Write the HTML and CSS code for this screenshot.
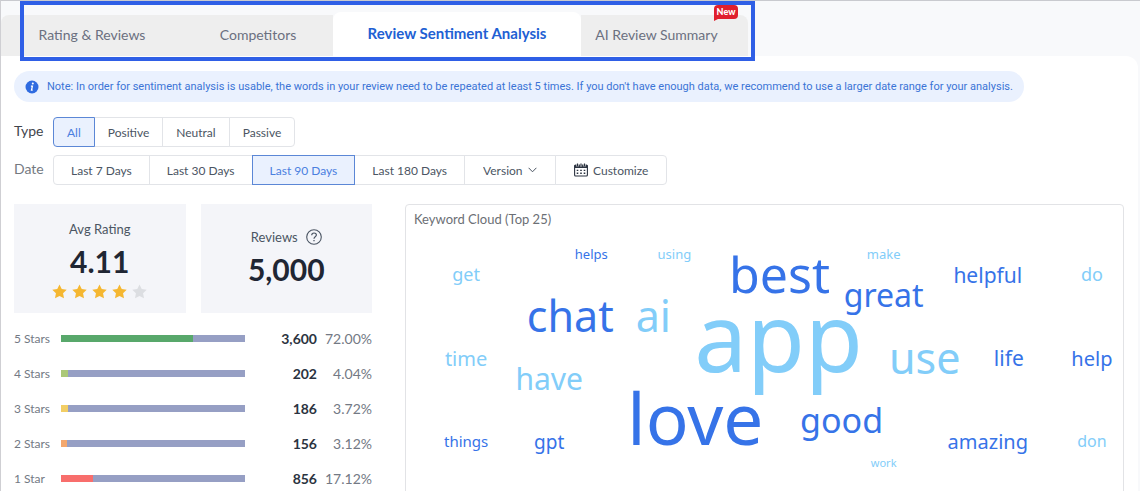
FILE: index.html
```
<!DOCTYPE html>
<html lang="en">
<head>
    <meta charset="UTF-8">
    <meta name="viewport" content="width=device-width, initial-scale=1.0">
    <title>Review Sentiment Analysis</title>
    <link rel="stylesheet" href="styles.css">
</head>
<body>
    <svg class="defs" width="0" height="0" aria-hidden="true">
        <symbol id="star" viewBox="0 0 16 16">
            <path d="M8 0.4l2.4 4.9 5.3 0.7-3.9 3.8 1 5.5L8 12.7 3.2 15.3l1-5.5L0.3 6l5.3-0.7z" fill="currentColor"/>
        </symbol>
    </svg>

    <nav class="tabs">
        <a class="tab tab-first" href="#rating">Rating &amp; Reviews</a>
        <a class="tab tab-second" href="#competitors">Competitors</a>
        <a class="tab tab-active" href="#sentiment" aria-current="page">Review Sentiment Analysis</a>
        <a class="tab tab-last" href="#summary">AI Review Summary<span class="badge">New</span></a>
        <div class="highlight"></div>
    </nav>

    <main class="panel">
        <div class="note">
            <svg width="14" height="14" viewBox="0 0 14 14" aria-hidden="true">
                <circle cx="7" cy="7" r="6.5" fill="#2f6be0"/>
                <circle cx="7.8" cy="3.6" r="1" fill="#fff"/>
                <path d="M5.9 6.1h1.5l-0.9 4.1h1.2" fill="none" stroke="#fff" stroke-width="1.3"/>
            </svg>
            <p>Note: In order for sentiment analysis is usable, the words in your review need to be repeated at least 5 times. If you don't have enough data, we recommend to use a larger date range for your analysis.</p>
        </div>

        <div class="filter">
            <span class="filter-label filter-label-dark" id="type-label">Type</span>
            <div class="group group-type" role="group" aria-labelledby="type-label">
                <button type="button" class="active">All</button>
                <button type="button">Positive</button>
                <button type="button">Neutral</button>
                <button type="button">Passive</button>
            </div>
        </div>

        <div class="filter">
            <span class="filter-label" id="date-label">Date</span>
            <div class="group group-date" role="group" aria-labelledby="date-label">
                <button type="button">Last 7 Days</button>
                <button type="button">Last 30 Days</button>
                <button type="button" class="active">Last 90 Days</button>
                <button type="button">Last 180 Days</button>
                <div class="version">
                    <select aria-label="Version">
                        <option>Version</option>
                    </select>
                    <svg width="9" height="6" viewBox="0 0 9 6" aria-hidden="true">
                        <path d="M0.6 0.8l3.9 4 3.9-4" fill="none" stroke="#4b5563"/>
                    </svg>
                </div>
                <button type="button" class="customize">
                    <svg width="14" height="14" viewBox="0 0 14 14" aria-hidden="true">
                        <rect x="0.6" y="2" width="12.8" height="11" rx="1" fill="none" stroke="#2b3340" stroke-width="1.1"/>
                        <path d="M0.6 2h12.8v3H0.6z" fill="#2b3340"/>
                        <path d="M3.5 0v3.4M7 0v3.4M10.5 0v3.4" stroke="#fff" stroke-width="2.2"/>
                        <path d="M3.5 0.4v3M7 0.4v3M10.5 0.4v3" stroke="#2b3340" stroke-width="1.2"/>
                        <path d="M2.7 7.4h9M2.7 10.3h9" stroke="#2b3340" stroke-width="1.4" stroke-dasharray="1.6 1.9"/>
                    </svg>
                    Customize
                </button>
            </div>
        </div>

        <div class="content">
            <section class="ratings">
                <div class="cards">
                    <div class="card">
                        <div class="card-title">Avg Rating</div>
                        <div class="card-value">4.11</div>
                        <div class="stars" role="img" aria-label="4 of 5 stars">
                            <svg><use href="#star"/></svg>
                            <svg><use href="#star"/></svg>
                            <svg><use href="#star"/></svg>
                            <svg><use href="#star"/></svg>
                            <svg class="empty"><use href="#star"/></svg>
                        </div>
                    </div>
                    <div class="card">
                        <div class="card-title">Reviews
                            <svg width="16" height="16" viewBox="0 0 16 16" fill="none" stroke="#4b5563" aria-hidden="true">
                                <circle cx="8" cy="8" r="7.3" stroke-width="1.1"/>
                                <path d="M5.7 6.3c0-3 4.7-3 4.7-0.2 0 1.7-2.4 1.8-2.4 3.6" stroke-width="1.2"/>
                                <path d="M8 10.9v1.4" stroke-width="1.3"/>
                            </svg>
                        </div>
                        <div class="card-value">5,000</div>
                    </div>
                </div>

                <table class="breakdown">
                    <tr>
                        <th scope="row">5 Stars</th>
                        <td><div class="bar"><div class="fill green" style="width: 72%"></div></div></td>
                        <td class="count">3,600</td>
                        <td class="percent">72.00%</td>
                    </tr>
                    <tr>
                        <th scope="row">4 Stars</th>
                        <td><div class="bar"><div class="fill lime" style="width: 4.04%"></div></div></td>
                        <td class="count">202</td>
                        <td class="percent">4.04%</td>
                    </tr>
                    <tr>
                        <th scope="row">3 Stars</th>
                        <td><div class="bar"><div class="fill yellow" style="width: 3.72%"></div></div></td>
                        <td class="count">186</td>
                        <td class="percent">3.72%</td>
                    </tr>
                    <tr>
                        <th scope="row">2 Stars</th>
                        <td><div class="bar"><div class="fill orange" style="width: 3.12%"></div></div></td>
                        <td class="count">156</td>
                        <td class="percent">3.12%</td>
                    </tr>
                    <tr>
                        <th scope="row">1 Star</th>
                        <td><div class="bar"><div class="fill red" style="width: 17.12%"></div></div></td>
                        <td class="count">856</td>
                        <td class="percent">17.12%</td>
                    </tr>
                </table>
            </section>

            <section class="cloud">
                <h2>Keyword Cloud (Top 25)</h2>
                <svg class="words" viewBox="0 0 716 256">
                    <g class="dark">
                        <text x="185" y="25" font-size="13">helps</text>
                        <text x="373" y="59" font-size="50">best</text>
                        <text x="477" y="73" font-size="32">great</text>
                        <text x="581" y="49" font-size="21">helpful</text>
                        <text x="164" y="98" font-size="43">chat</text>
                        <text x="602" y="132" font-size="21">life</text>
                        <text x="685" y="132" font-size="20">help</text>
                        <text x="289" y="211" font-size="71">love</text>
                        <text x="435" y="199" font-size="34">good</text>
                        <text x="60" y="213" font-size="15">things</text>
                        <text x="143" y="215" font-size="19">gpt</text>
                        <text x="581" y="215" font-size="20">amazing</text>
                    </g>
                    <g class="light">
                        <text x="60" y="47" font-size="18">get</text>
                        <text x="268" y="25" font-size="13">using</text>
                        <text x="477" y="25" font-size="13">make</text>
                        <text x="685" y="47" font-size="18">do</text>
                        <text x="247" y="98" font-size="43">ai</text>
                        <text x="372" y="138" font-size="94">app</text>
                        <text x="518" y="140" font-size="43">use</text>
                        <text x="60" y="132" font-size="20">time</text>
                        <text x="143" y="156" font-size="30">have</text>
                        <text x="685" y="213" font-size="16">don</text>
                        <text x="477" y="233" font-size="11">work</text>
                    </g>
                </svg>
            </section>
        </div>
    </main>
</body>
</html>
```
FILE: styles.css
```
* {
    box-sizing: border-box;
}
body {
    margin: 0;
    min-height: 100vh;
    overflow: hidden;
    background-color: #f8f9fb;
    border-top: 1px solid #c9cacf;
    border-left: 1px solid #cfcfd3;
    font-family: Lato, "Liberation Sans", sans-serif;
    color: #4b5563;
}
.defs {
    position: absolute;
}
.tabs {
    position: relative;
    display: flex;
    align-items: flex-end;
    width: max-content;
    height: 55px;
}
.tab {
    display: flex;
    align-items: center;
    justify-content: center;
    height: 41px;
    padding-bottom: 2px;
    background-color: #eee;
    color: #6b7080;
    font-size: 14px;
    text-decoration: none;
}
.tab-first {
    width: 182px;
    border-radius: 8px 0 0 0;
}
.tab-second {
    width: 150px;
}
.tab-active {
    width: 248px;
    height: 44px;
    background-color: #fff;
    border-radius: 8px 8px 0 0;
    color: #2160d3;
    font-size: 15px;
    font-weight: bold;
}
.tab-last {
    position: relative;
    width: 167px;
    padding-right: 16px;
    border-radius: 0 8px 0 0;
}
.badge {
    position: absolute;
    top: -10px;
    right: 10px;
    width: 24px;
    border-radius: 4px 4px 4px 0;
    background-color: #e01f2d;
    color: #fff;
    font-size: 9px;
    font-weight: 900;
    line-height: 14px;
    text-align: center;
}
.badge::after {
    content: "";
    position: absolute;
    top: 13px;
    left: 0;
    border-top: 3px solid #e01f2d;
    border-right: 6px solid transparent;
}
.highlight {
    position: absolute;
    top: 0;
    right: -7px;
    bottom: -5px;
    left: 19px;
    border: 4px solid #2f5fe6;
    pointer-events: none;
}
.panel {
    margin-right: 2px;
    padding: 15px 14px 0 13px;
    background-color: #fff;
    border-radius: 0 12px 0 0;
}
.note {
    display: flex;
    align-items: center;
    gap: 8px;
    width: max-content;
    max-width: 100%;
    min-height: 31px;
    padding: 0 11px;
    border-radius: 16px;
    background-color: #eaf1fe;
    color: #3b74d6;
    font-family: Roboto, sans-serif;
    font-size: 11px;
}
.note p {
    margin: 0;
}
.filter {
    display: flex;
    align-items: center;
    height: 30px;
    margin-top: 8px;
}
.note + .filter {
    margin-top: 15px;
}
.filter-label {
    width: 39px;
    padding-bottom: 3px;
    font-size: 14px;
    color: #74797f;
}
.filter-label-dark {
    color: #3f454d;
}
.group {
    display: flex;
    height: 30px;
}
.group button,
.version {
    display: flex;
    align-items: center;
    justify-content: center;
    gap: 5px;
    margin: 0 0 0 -1px;
    padding: 0 13px;
    border: 1px solid #e2e4e8;
    background-color: #fff;
    color: #4b5563;
    font-family: inherit;
    font-size: 12px;
}
.group-date button {
    padding: 0 17px;
}
.group-date .version,
.group-date .customize {
    padding: 0 18px;
}
.group > :first-child {
    margin-left: 0;
    border-radius: 4px 0 0 4px;
}
.group > :last-child {
    border-radius: 0 4px 4px 0;
}
.group .active {
    z-index: 1;
    border-color: #5b87d6;
    background-color: #eaf1fe;
    color: #4a7fe0;
}
.version select {
    appearance: none;
    padding: 0;
    border: 0;
    background: none;
    color: inherit;
    font: inherit;
}
.content {
    display: grid;
    grid-template-columns: 358px 1fr;
    gap: 33px;
    margin-top: 19px;
}
.cards {
    display: grid;
    grid-template-columns: 1fr 1fr;
    gap: 15px;
}
.card {
    display: flex;
    flex-direction: column;
    align-items: center;
    justify-content: center;
    height: 109px;
    padding-top: 2px;
    background-color: #f4f5f9;
}
.card-title {
    display: flex;
    align-items: center;
    gap: 8px;
    font-size: 13px;
    line-height: 18px;
}
.card-value {
    color: #1f2633;
    font-size: 30px;
    font-weight: bold;
    line-height: 46px;
}
.stars {
    display: flex;
    gap: 5px;
    color: #f5b731;
}
.stars svg {
    width: 15px;
    height: 15px;
}
.stars .empty {
    color: #dcdee2;
}
.breakdown {
    width: 100%;
    margin-top: 8px;
    border-collapse: collapse;
    table-layout: fixed;
}
.breakdown th,
.breakdown td {
    height: 35px;
    padding: 0;
    font-size: 14px;
    text-align: right;
}
.breakdown th {
    width: 47px;
    color: #737984;
    font-size: 12px;
    font-weight: normal;
    text-align: left;
}
.breakdown td:nth-child(2) {
    width: 184px;
}
.breakdown .count {
    color: #2b3340;
    font-weight: bold;
}
.breakdown .percent {
    width: 55px;
    color: #737984;
}
.bar {
    height: 7px;
    background-color: #969fc4;
}
.fill {
    height: 100%;
}
.green {
    background-color: #58a86b;
}
.lime {
    background-color: #abc878;
}
.yellow {
    background-color: #f2ce65;
}
.orange {
    background-color: #f3a76d;
}
.red {
    background-color: #f86e6c;
}
.cloud {
    border: 1px solid #e2e3e6;
    border-radius: 4px 4px 0 0;
}
.cloud h2 {
    margin: 0;
    padding: 0 8px 1px;
    color: #6c6f75;
    font-size: 13px;
    font-weight: normal;
    line-height: 28px;
}
.words {
    display: block;
    width: 100%;
    font-family: "Noto Sans", "Open Sans", sans-serif;
    text-anchor: middle;
}
.dark {
    fill: #3673e8;
}
.light {
    fill: #82cdf9;
}
```
